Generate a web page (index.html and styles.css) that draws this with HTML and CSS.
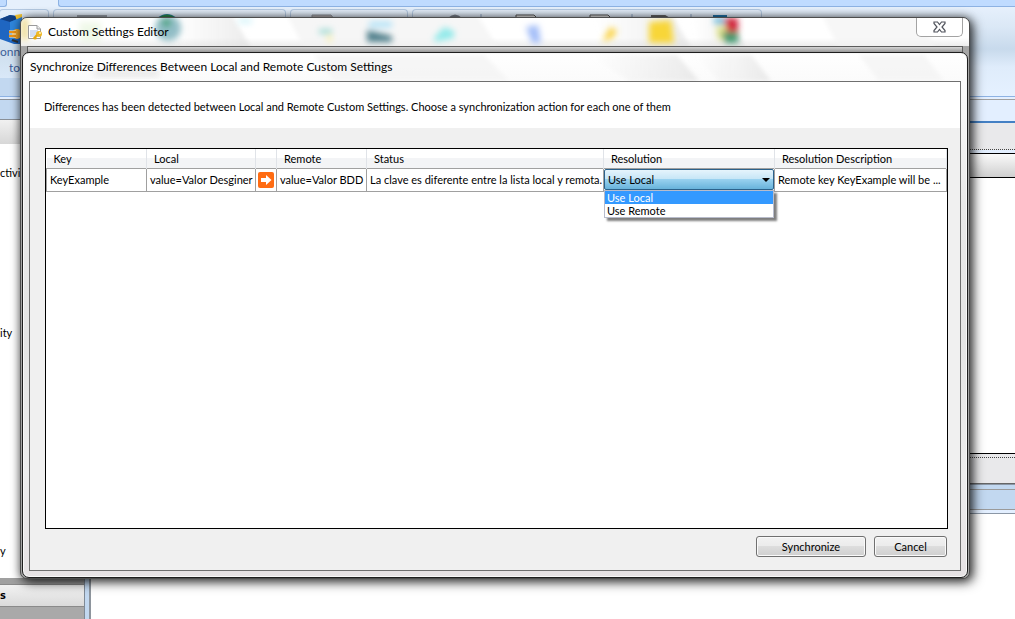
FILE: index.html
```
<!DOCTYPE html>
<html lang="en">
<head>
  <meta charset="UTF-8" />
  <meta name="viewport" content="width=device-width, initial-scale=1.0"/>
  <title>Synchronize Differences</title>
  <link rel="stylesheet" href="styles.css">
</head>
<body>

<!-- Designer behind the dialogs -->
<div class="app">
  <div class="tabs">
    <div class="tab-left"></div>
    <div class="tab-active"></div>
    <div class="tab-strip"></div>
  </div>

  <div class="ribbon">
    <div class="group group-connect">
      <svg width="22" height="30" viewBox="0 0 22 30">
        <path d="M0 5 L10 1 L22 3 V30 H14 L0 25 Z" fill="#1f66c1"/>
        <path d="M0 5 L10 1 L22 3 L10 8 Z" fill="#103f83"/>
        <path d="M15 1 L22 0 V9 L17 7 Z" fill="#f3c331"/>
        <path d="M10 8 L22 3 V20 L10 27 Z" fill="#2f86dc"/>
        <path d="M12 26 L18 28" stroke="#333" stroke-width="2"/>
        <circle cx="17" cy="20" r="5" fill="#f4a92a"/>
        <path d="M9 18 h7 M9 22 h7" stroke="#fff3d0" stroke-width="3"/>
        <path d="M9 18 h7 M9 22 h7" stroke="#ee9414" stroke-width="2"/>
      </svg>
      <span>onnect</span>
      <span class="second">to</span>
    </div>
    <div class="group group-edit">
      <svg width="110" height="30" viewBox="0 0 110 30">
        <rect x="0" y="1" width="30" height="8" fill="#9ba3ad"/>
        <circle cx="90" cy="13" r="13" fill="#2f86a8"/>
        <path d="M81 4 Q90 -3 99 4 L94 8 H84 Z" fill="#2c8a4c"/>
      </svg>
    </div>
    <div class="group group-view">
      <svg width="24" height="8" viewBox="0 0 24 8">
        <path d="M1 8 V1 H20 L23 5 V8" fill="#b9b4b6" stroke="#8d9299"/>
      </svg>
    </div>
    <div class="group group-tools">
      <svg width="340" height="8" viewBox="0 0 340 8">
        <path d="M36 5 Q42 -1 48 5" fill="none" stroke="#7d858f" stroke-width="3"/>
        <path d="M68 0 V8 M219 0 V8 M278 0 V8" stroke="#8fa6c4"/>
        <path d="M103 8 V1 H121 L125 5 V8 M177 8 V1 H195 L199 5 V8" fill="#eee" stroke="#555"/>
        <path d="M239 5 V2 H252 L257 5" fill="#aaa" stroke="#666" stroke-width="2"/>
        <path d="M300 1 H314 V8 H300 Z" fill="#2276ac"/>
        <path d="M314 3 H324 V8 H314 Z" fill="#c22b3c"/>
      </svg>
    </div>
  </div>

  <div class="workspace">
    <div class="sidebar">
      <div class="sidebar-title"></div>
      <div class="sidebar-head"></div>
      <div class="activities">
        <span>ctivity</span>
        <span>ity</span>
        <span>y</span>
      </div>
      <div class="sidebar-gap"></div>
      <div class="sidebar-section">s</div>
      <div class="sidebar-bottom"></div>
    </div>
    <div class="splitter"></div>
    <div class="document">
      <div class="document-tab"></div>
      <div class="document-bar"></div>
      <div class="document-head"></div>
      <div class="document-body"></div>
      <div class="document-foot"></div>
      <div class="document-status"></div>
      <div class="document-rest"></div>
    </div>
  </div>
</div>

<!-- Custom Settings Editor window -->
<div class="window editor">
  <div class="titlebar">
    <svg class="glass" width="943" height="29" viewBox="0 0 943 29">
      <defs>
        <filter id="blur" x="-50%" y="-50%" width="200%" height="200%"><feGaussianBlur stdDeviation="3"/></filter>
        <filter id="soft"><feGaussianBlur stdDeviation="2"/></filter>
        <linearGradient id="shine" x1="0" x2="1">
          <stop offset="0" stop-color="#e4e4e4" stop-opacity="0"/>
          <stop offset="1" stop-color="#dcdcdc" stop-opacity="0.6"/>
        </linearGradient>
      </defs>
      <g filter="url(#soft)">
        <path d="M150 -5 H210 L232 34 H150 Z" fill="url(#shine)"/>
        <path d="M265 -5 H455 L480 34 H285 Z" fill="#f2f2f2" opacity="0.7"/>
        <path d="M570 -5 H650 L672 34 H590 Z" fill="url(#shine)"/>
        <path d="M670 -5 H709 L726 34 H680 Z" fill="url(#shine)"/>
        <path d="M800 -5 H900 L915 34 H820 Z" fill="#f4f4f4" opacity="0.7"/>
      </g>
      <g filter="url(#blur)">
        <path d="M0 0 H7 V22 H0 Z" fill="#e7d278" opacity="0.8"/>
        <path d="M58 4 H80 V24 H60 Z" fill="#e5f4d9" opacity="0.6"/>
        <circle cx="147" cy="10" r="13" fill="#6ea7b3" opacity="0.75"/>
        <path d="M139 2 H151 L146 10 Z" fill="#3c9f6b"/>
        <path d="M217 0 h14 v6 h-14 Z" fill="#dbf6fb"/>
        <path d="M298 11 h13 v5 h-13 Z" fill="#a3dcd5"/>
        <path d="M306 17 h5 v7 h-5 Z" fill="#fbf2b4"/>
        <path d="M348 4 H371 V9 H348 Z" fill="#a9e0f8"/>
        <path d="M346 12 L371 18 V24 H346 Z" fill="#4f7f8b"/>
        <path d="M413 20 L423 9 L433 13 V20 L414 24 Z" fill="#92eaea"/>
        <path d="M505 9 L517 7 L520 25 H511 Z" fill="#a3bdf8"/>
        <path d="M581 24 L589 9 L596 12 L592 20 Z" fill="#fbd44a"/>
        <path d="M628 4 L650 2 L653 25 H628 Z" fill="#f8d638"/>
        <path d="M693 0 H706 V6 H693 Z" fill="#65b8dc"/>
        <path d="M695 8 H706 V22 H697 Z" fill="#e3e48e"/>
        <path d="M703 0 H717 V14 H706 Z" fill="#d2283c"/>
        <path d="M700 14 H717 V25 H704 Z" fill="#45996f"/>
      </g>
    </svg>
    <svg class="window-icon" width="16" height="17" viewBox="0 0 16 17">
      <path d="M1.500 1.500 H10 L13.500 5 V14.500 H1.500 Z" fill="#fff" stroke="#9a9a9a"/>
      <path d="M10 1.500 V5 H13.500" fill="#eee" stroke="#9a9a9a"/>
      <path d="M3 6 H11 V13 H3 Z" fill="#d4def2"/>
      <circle cx="12" cy="10" r="3" fill="#f0b929"/>
      <circle cx="13" cy="9" r="1" fill="#fff3c0"/>
      <path d="M10 11 L6.500 15 M8 13.500 L9.500 15" stroke="#e5a812" stroke-width="2" fill="none"/>
    </svg>
    <h1>Custom Settings Editor</h1>
    <button class="close" aria-label="Close">
      <svg width="13" height="12" viewBox="0 0 13 12">
        <path d="M1 1 H4.500 L6.500 3.500 L8.500 1 H12 V2.500 L9 6 L12 9.500 V11 H8.500 L6.500 8.500 L4.500 11 H1 V9.500 L4 6 L1 2.500 Z" fill="#fff" stroke="#50535c" stroke-width="1.200"/>
      </svg>
    </button>
  </div>
  <div class="client"></div>
</div>

<!-- Synchronize dialog -->
<div class="window dialog">
  <div class="dialog-title">
    <svg class="glass" width="930" height="28" viewBox="0 0 930 28">
      <g filter="url(#soft)">
        <path d="M560 2 H648 L670 28 H600 Z" fill="url(#shine)"/>
        <path d="M665 2 H722 L742 28 H690 Z" fill="url(#shine)"/>
        <path d="M285 2 H455 L480 28 H305 Z M830 2 H895 L915 28 H850 Z" fill="#f4f4f4" opacity="0.8"/>
      </g>
      <path d="M65 18 H130 V23 H65 Z" fill="#d8d8d8" filter="url(#blur)" opacity="0.7"/>
    </svg>
    <h2>Synchronize Differences Between Local and Remote Custom Settings</h2>
  </div>
  <div class="dialog-body">
    <p class="message">Differences has been detected between Local and Remote Custom Settings. Choose a synchronization action for each one of them</p>

    <div class="grid">
      <table>
        <colgroup>
          <col class="col-key">
          <col class="col-local">
          <col class="col-arrow">
          <col class="col-remote">
          <col class="col-status">
          <col class="col-resolution">
          <col>
        </colgroup>
        <thead>
          <tr>
            <th>Key</th>
            <th>Local</th>
            <th></th>
            <th>Remote</th>
            <th>Status</th>
            <th><label for="resolution">Resolution</label></th>
            <th>Resolution Description</th>
          </tr>
        </thead>
        <tbody>
          <tr>
            <td>KeyExample</td>
            <td>value=Valor Desginer</td>
            <td class="arrow">
              <svg width="16" height="16" viewBox="0 0 16 16">
                <rect width="16" height="16" rx="2" fill="#ff6c13"/>
                <path d="M3 6 H8 V3 L13.500 8 L8 13 V10 H3 Z" fill="#fff"/>
              </svg>
            </td>
            <td>value=Valor BDD</td>
            <td>La clave es diferente entre la lista local y remota.</td>
            <td class="resolution">
              <select id="resolution">
                <option selected>Use Local</option>
                <option>Use Remote</option>
              </select>
              <ul class="options">
                <li class="selected">Use Local</li>
                <li>Use Remote</li>
              </ul>
            </td>
            <td>Remote key KeyExample will be ...</td>
          </tr>
        </tbody>
      </table>
    </div>

    <div class="buttons">
      <button class="sync">Synchronize</button>
      <button class="cancel">Cancel</button>
    </div>
  </div>
</div>

</body>
</html>
```
FILE: styles.css
```
* {
  box-sizing: border-box;
}

body {
  font-family: Lato, "Liberation Sans", sans-serif;
  font-size: 11px;
  color: #000;
  margin: 0;
  height: 100vh;
  overflow: hidden;
  position: relative;
}

svg {
  display: block;
}

h1, h2, p, ul {
  margin: 0;
  padding: 0;
  font-weight: normal;
}

/* application in the background */
.app {
  display: flex;
  flex-direction: column;
  height: 100%;
}

.tabs {
  display: flex;
  height: 7px;
  background: #e6f0fc;
}

.tab-left {
  width: 7px;
  background: #bfdbff;
  border: solid #8db2e3;
  border-width: 0 1px 1px 0;
  border-radius: 0 0 3px 0;
}

.tab-active {
  width: 51px;
}

.tab-strip {
  flex: 1;
  background: #bfdbff;
  border: solid #8db2e3;
  border-width: 0 0 1px 1px;
  border-radius: 0 0 0 3px;
}

.ribbon {
  display: flex;
  gap: 4px;
  height: 90px;
  padding-top: 2px;
  background: linear-gradient(#e6f0fc 0, #dbe8f6 20px, #c8daec 42px, #dfecfb 60px, #e5f1ff 100%);
  border-bottom: 1px solid #8db2e3;
}

.group {
  border: 1px solid #b4c9e2;
  border-bottom: none;
  border-radius: 4px 4px 0 0;
  padding-top: 4px;
  background: linear-gradient(#e4eefa, #cfdfee 50%, #d9e8f8 68px, #c2d8f0 68px);
}

.group-connect {
  width: 50px;
  margin-left: -1px;
  color: #3e5f9b;
  font-size: 12px;
  line-height: 16px;
}

.group-connect span {
  display: block;
}

.group-connect .second {
  padding-left: 9px;
}

.group-edit {
  width: 233px;
  padding-left: 23px;
}

.group-view {
  width: 118px;
  padding-left: 20px;
}

.group-tools {
  width: 350px;
}

.workspace {
  flex: 1;
  display: flex;
  padding-top: 2px;
  background: #e3efff;
}

.sidebar {
  width: 85px;
  display: flex;
  flex-direction: column;
  border-right: 1px solid #7f8a96;
}

.sidebar-title {
  height: 21px;
  background: #c2d8f0;
  border: solid #8a9097;
  border-width: 1px 0;
}

.sidebar-head {
  height: 24px;
  background: linear-gradient(#f1f1f1, #d7d7d7);
}

.activities {
  flex: 1;
  display: flex;
  flex-direction: column;
  gap: 144px;
  padding: 21px 0 19px;
  background: #fff;
  line-height: 16px;
}

.activities span:last-child {
  margin-top: auto;
}

.sidebar-gap {
  height: 6px;
  background: #a0a0a0;
}

.sidebar-section {
  height: 23px;
  border: solid #8a8a8a;
  border-width: 1px 0;
  background: linear-gradient(#f2f2f2, #dadada);
  font-family: "DejaVu Sans Condensed", "DejaVu Sans", sans-serif;
  font-weight: bold;
  line-height: 22px;
}

.sidebar-bottom {
  height: 12px;
  background: #a9a9a9;
}

.splitter {
  width: 6px;
  background: #c2d8f0;
  border-right: 2px solid #8e959d;
}

.document {
  flex: 1;
  display: flex;
  flex-direction: column;
}

.document-tab {
  height: 24px;
  background: #e3efff;
  border-top: 1px solid #a0a0a0;
  border-bottom: 2px solid #4480c4;
}

.document-bar {
  height: 27px;
  background: #e9e9eb;
  border-bottom: 1px dotted #444;
}

.document-head {
  height: 25px;
  margin-top: 3px;
  border: solid #000;
  border-width: 1px 0;
  background: linear-gradient(#fafafa, #cfcfcf);
}

.document-body {
  flex: 1;
  background: #fff;
}

.document-foot {
  height: 31px;
  border-top: 1px solid #000;
  border-bottom: 1px solid #666;
  background: #e9e9eb;
}

.document-foot::before {
  content: "";
  display: block;
  margin-top: 3px;
  border-top: 1px dotted #444;
}

.document-status {
  height: 30px;
  border: solid #8b97a6;
  border-width: 1px 0;
  background: linear-gradient(#c2d8f0 4px, #9a9a9a 4px, #9a9a9a 5px, #c2d8f0 5px, #c2d8f0 24px, #9a9a9a 24px, #9a9a9a 25px, #e3efff 25px);
}

.document-rest {
  height: 105px;
  background: #fff;
}

/* windows */
.window {
  position: absolute;
  display: flex;
  flex-direction: column;
}

.editor {
  left: 20px;
  right: 45px;
  top: 17px;
  bottom: 40px;
  padding: 0 6px 6px;
  border: 1px solid #4d4d4d;
  border-radius: 7px;
  background: #a5a5a5;
  box-shadow: 3px 3px 12px rgba(0, 0, 0, 0.75), 0 0 8px rgba(0, 0, 0, 0.4);
}

.titlebar {
  position: relative;
  display: flex;
  align-items: center;
  height: 28px;
  margin: 0 -6px;
  padding-left: 6px;
  border-radius: 6px 6px 0 0;
  background: linear-gradient(#fff 70%, #ececec);
  overflow: hidden;
}

.glass {
  position: absolute;
  left: 0;
  top: 0;
}

.window-icon {
  position: relative;
}

h1, h2 {
  position: relative;
  font-size: 12px;
  line-height: 16px;
  white-space: nowrap;
}

h1 {
  padding-left: 5px;
}

.close {
  position: relative;
  align-self: flex-start;
  display: flex;
  justify-content: center;
  align-items: center;
  width: 47px;
  height: 19px;
  margin: 0 6px 0 auto;
  padding: 0;
  border: 1px solid #a3a3a3;
  border-top: none;
  border-radius: 0 0 5px 5px;
  background: #fff;
}

.client {
  flex: 1;
  border: 1px solid #5c5c5c;
  border-bottom: none;
  background: linear-gradient(#d5d5d5, #8c8c8c 6px);
}

.dialog {
  left: 22px;
  right: 47px;
  top: 52px;
  bottom: 41px;
  padding: 0 6px 6px;
  border: 1px solid #1e1e1e;
  border-radius: 7px;
  background: linear-gradient(#fff, #e9e9e9 150px, #e4e4e4 280px, #ededed 420px, #e6e2e4);
  box-shadow: inset 0 0 0 1px #f8f8f8;
}

.dialog-title {
  position: relative;
  display: flex;
  align-items: center;
  height: 28px;
}

.dialog-title h2 {
  padding-left: 1px;
}

.dialog-body {
  flex: 1;
  display: flex;
  flex-direction: column;
  border: 1px solid #6f6f6f;
  background: #f0f0f0;
}

.message {
  padding: 18px 14px 14px;
  background: #fff;
  line-height: 14px;
  white-space: nowrap;
}

.grid {
  flex: 1;
  margin: 20px 12px 0 15px;
  border: 1px solid #000;
  background: #fff;
}

table {
  width: 100%;
  table-layout: fixed;
  border-collapse: collapse;
}

.col-key {
  width: 100px;
}

.col-local {
  width: 109px;
}

.col-arrow {
  width: 21px;
}

.col-remote {
  width: 90px;
}

.col-status {
  width: 237px;
}

.col-resolution {
  width: 171px;
}

th {
  height: 19px;
  padding: 0 0 0 7px;
  border-right: 1px solid #e0e3e8;
  background: linear-gradient(#fff 45%, #f3f4f6 45%);
  font-weight: normal;
  text-align: left;
  white-space: nowrap;
}

td {
  height: 23px;
  padding: 0 0 0 3px;
  border: 1px solid #a0a0a0;
  white-space: nowrap;
}

.arrow {
  padding: 0 0 0 2px;
}

.resolution {
  position: relative;
  padding: 0;
}

select {
  display: block;
  width: 100%;
  height: 21px;
  padding: 0 3px;
  appearance: none;
  border: 1px solid #2c628b;
  border-radius: 2px;
  background: linear-gradient(#e5f4fc, #c4e5f6 50%, #98d1ef 50%, #68b3db);
  font: inherit;
  color: #000;
}

.resolution::after {
  content: "";
  position: absolute;
  right: 4px;
  top: 9px;
  border: 4px solid transparent;
  border-top-color: #000;
  border-bottom: none;
}

.options {
  position: absolute;
  left: 0;
  right: 0;
  top: 21px;
  border: 1px solid #b8bccb;
  background: #fff;
  box-shadow: 3px 3px 2px rgba(0, 0, 0, 0.5);
  list-style: none;
  line-height: 13px;
}

.options li {
  padding: 0 2px;
}

.options .selected {
  background: #3399ff;
  color: #fff;
}

.buttons {
  display: flex;
  justify-content: flex-end;
  gap: 8px;
  padding: 7px 13px 13px;
}

.buttons button {
  height: 21px;
  padding: 0;
  border: 1px solid #707070;
  border-radius: 3px;
  background: linear-gradient(#f2f2f2, #ebebeb 50%, #dddddd 50%, #cfcfcf);
  box-shadow: inset 0 0 0 1px #fafafa;
  font: inherit;
  color: #000;
}

.buttons .sync {
  width: 110px;
}

.buttons .cancel {
  width: 73px;
}
```
